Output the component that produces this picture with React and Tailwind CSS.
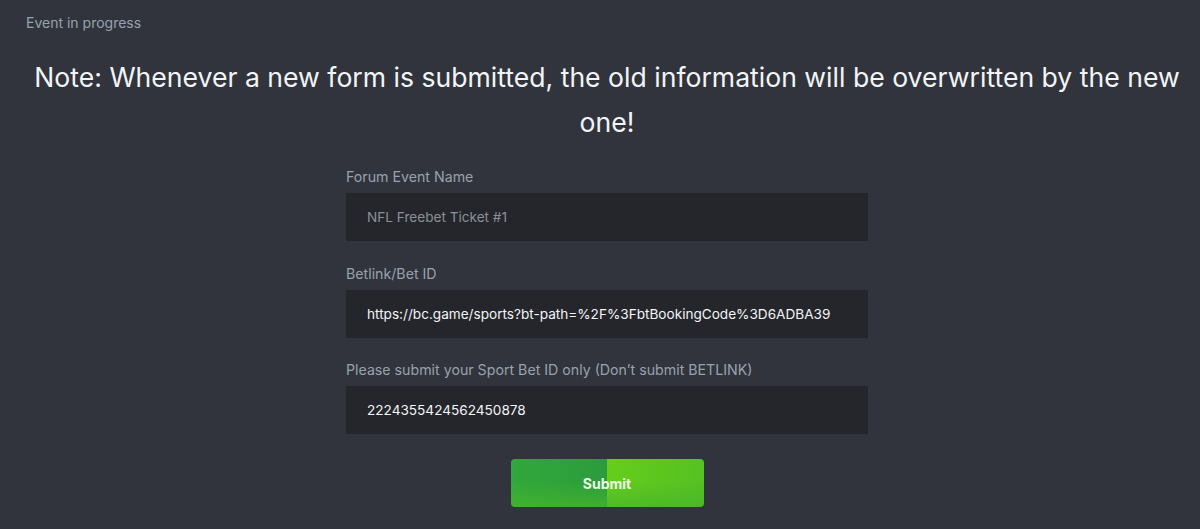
export default function App() {
  return (
    <div className="w-[1200px] h-[529px] bg-[#31343c] overflow-hidden" style={{ fontFamily: "Inter, 'Noto Sans', sans-serif" }}>
      <div className="pl-[26px] pt-[13px] text-[14px] leading-[20px] text-[#98a2ad]">Event in progress</div>
      <div className="pl-[27px] pr-[13px] mt-[22px] text-center text-[26.6px] leading-[45px] text-[#f3f4f6]">
        Note: Whenever a new form is submitted, the old information will be overwritten by the new one!
      </div>
      <div className="flex justify-center pl-[14px] mt-[22px]">
        <div className="w-[522px] flex flex-col">
          <div className="text-[14.2px] leading-[20px] text-[#98a2ad]">Forum Event Name</div>
          <div className="mt-[6px] h-[48px] bg-[#24262b] flex items-center pl-[21px] text-[13.6px] text-[#8c9097]">NFL Freebet Ticket #1</div>
          <div className="mt-[23px] text-[14.2px] leading-[20px] text-[#98a2ad]">Betlink/Bet ID</div>
          <div className="mt-[6px] h-[48px] bg-[#24262b] flex items-center pl-[21px] text-[13.6px] text-[#f3f4f6]">https://bc.game/sports?bt-path=%2F%3FbtBookingCode%3D6ADBA39</div>
          <div className="mt-[22px] text-[14.2px] leading-[20px] text-[#98a2ad]">Please submit your Sport Bet ID only (Don’t submit BETLINK)</div>
          <div className="mt-[6px] h-[48px] bg-[#24262b] flex items-center pl-[21px] text-[13.6px] text-[#f3f4f6]">2224355424562450878</div>
          <div className="mt-[25px] flex justify-center">
            <button className="w-[193px] h-[48px] rounded-[4px] bg-[linear-gradient(180deg,transparent_45%,rgba(70,180,44,0.75)_100%),linear-gradient(90deg,#31a83a_0%,#2b9c3e_50%,#66cd1a_50%,#55c123_100%)] text-[14px] font-bold text-[#eefbe9]">Submit</button>
          </div>
        </div>
      </div>
    </div>
  );
}
